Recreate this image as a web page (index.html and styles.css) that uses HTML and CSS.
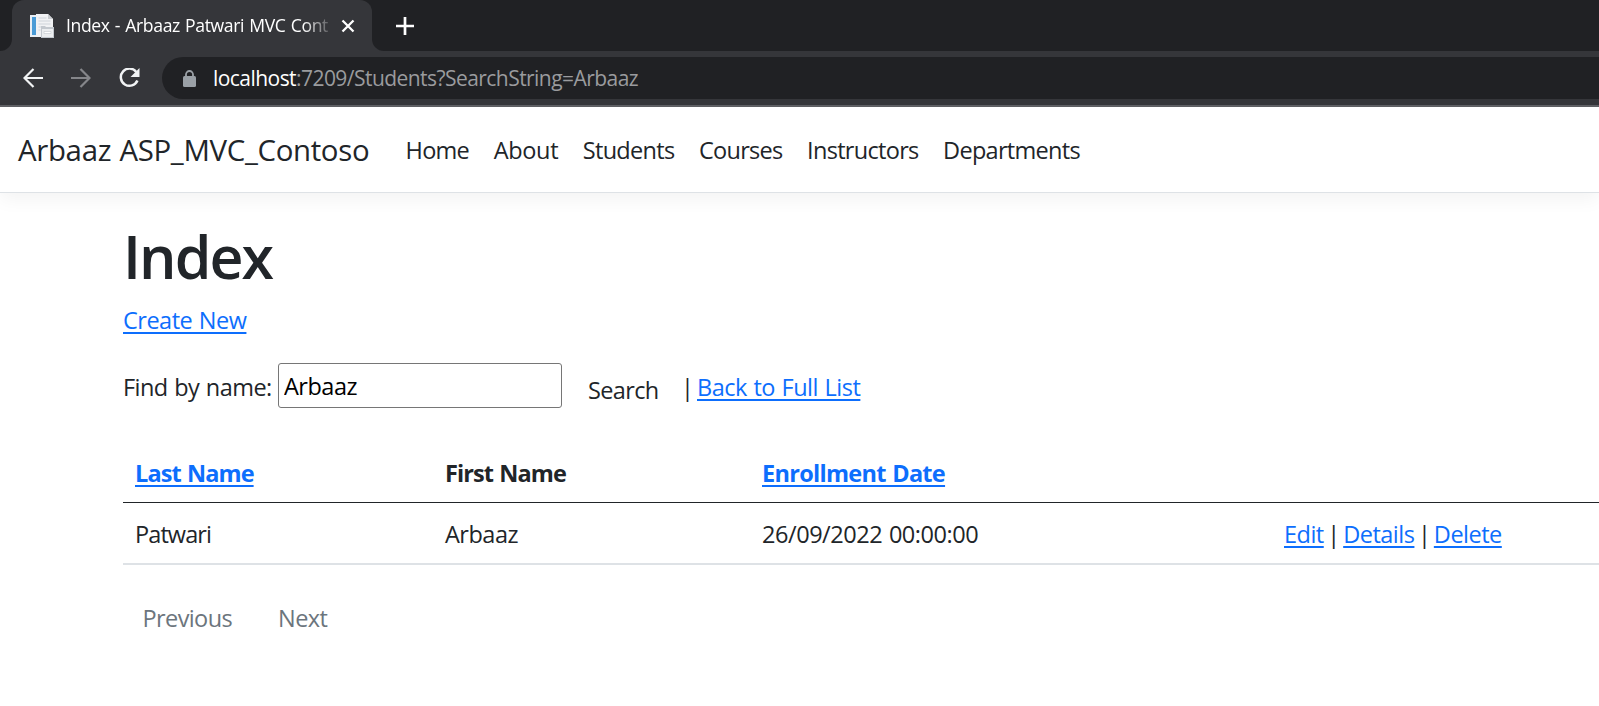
FILE: index.html
```html
<!DOCTYPE html>
<html lang="en">
<head>
<meta charset="utf-8">
<title>Index - Arbaaz Patwari MVC Contoso</title>
<link rel="stylesheet" href="styles.css">
</head>
<body>
<div class="browser">
  <div class="tabstrip">
    <div class="tab-prev"></div>
    <div class="tab">
      <svg class="favicon" width="24" height="24" viewBox="0 0 24 24">
        <path d="M0 1h7v22H0z" fill="#e8eef4"/><path d="M2 3h4v18H2z" fill="#4a9bd6"/>
        <path d="M6 0h12l5 5v18H6z" fill="#f1f2f4"/><path d="M18 0l5 5h-5z" fill="#c9ccd0"/>
        <path d="M8.500 4h8M8.500 7h12M8.500 10h12M8.500 13h3M8.500 16h2" stroke="#cfd4da" stroke-width="1.200"/>
        <path d="M11 14v-2h4l1 1h8v11H11z" fill="#c3c8ce"/><path d="M12 15h11v8H12z" fill="#eceef0"/><path d="M14 17.500h7v2h-7z" fill="#fff" stroke="#c5cacf" stroke-width=".6"/>
      </svg>
      <span class="tab-title">Index - Arbaaz Patwari MVC Cont</span>
      <svg class="tab-close" width="14" height="14" viewBox="0 0 14 14"><path d="M1.500 1.500l11 11M12.500 1.500l-11 11" stroke="#fff" stroke-width="2.300"/></svg>
    </div>
    <div class="tab-next"><svg width="18" height="18" viewBox="0 0 18 18"><path d="M9 0v18M0 9h18" stroke="#fff" stroke-width="2.700"/></svg></div>
  </div>
  <div class="toolbar">
    <div class="tools">
      <svg width="20" height="20" viewBox="0 0 20 20" fill="none" stroke="#f1f3f4" stroke-width="2.200"><path d="M20 10H1.800M10.500 1L1.500 10l9 9"/></svg>
      <svg width="20" height="20" viewBox="0 0 20 20" fill="none" stroke="#85868a" stroke-width="2.200"><path d="M0 10h18.200M9.500 1l9 9-9 9"/></svg>
      <svg width="22" height="20" viewBox="0 0 22 20" fill="none" stroke="#f1f3f4" stroke-width="2.500"><path d="M17.300 4A8.600 8.600 0 1 0 18.400 12.500"/><path d="M20.500 0v9h-9z" fill="#f1f3f4" stroke="none"/></svg>
    </div>
    <div class="omnibox">
      <svg width="13" height="17" viewBox="0 0 13 17"><rect y="6" width="13" height="11" rx="1.500" fill="#9aa0a6"/><path d="M3 7V4.500a3.500 3.500 0 0 1 7 0V7" fill="none" stroke="#9aa0a6" stroke-width="1.800"/></svg>
      <span class="url"><span class="host">localhost</span><span class="path">:7209/Students?SearchString=Arbaaz</span></span>
    </div>
  </div>
</div>
<header class="navbar">
  <a class="brand">Arbaaz ASP_MVC_Contoso</a>
  <nav class="links"><a>Home</a><a class="loose">About</a><a>Students</a><a>Courses</a><a>Instructors</a><a>Departments</a></nav>
</header>
<main class="content">
  <h1>Index</h1>
  <p class="create"><a class="link">Create New</a></p>
  <form class="search">
    <label for="q">Find by name:</label>
    <input id="q" type="text" value="Arbaaz">
    <span class="btn">Search</span>
    <span class="bar">|</span>
    <a class="link back">Back to Full List</a>
  </form>
  <div class="table">
    <div class="row head"><div class="tight"><a class="link">Last Name</a></div><div class="tight">First Name</div><div><a class="link">Enrollment Date</a></div><div></div></div>
    <div class="row"><div class="tight">Patwari</div><div>Arbaaz</div><div class="date">26/09/2022 00:00:00</div><div class="actions"><a class="link">Edit</a><span>|</span><a class="link">Details</a><span>|</span><a class="link">Delete</a></div></div>
  </div>
  <div class="pager"><span>Previous</span><span>Next</span></div>
</main>
</body>
</html>
```
FILE: styles.css
```css
* { box-sizing: border-box; }
body { margin: 0; width: 1599px; height: 706px; overflow: hidden; background: #fff; color: #212529; font: 23.5px/36px "Open Sans", "Noto Sans", sans-serif; letter-spacing: -.5px; word-spacing: 1px; white-space: nowrap; }
svg { display: block; flex: none; }
.browser { height: 107px; background: #35363a; border-bottom: 2px solid #5f6064; }
.tabstrip { display: flex; height: 51px; }
.tab-prev { width: 12px; border-bottom-right-radius: 12px; }
.tab { width: 360px; padding: 0 17px 0 18px; display: flex; align-items: center; background: #35363a; box-shadow: 0 -12px 0 12px #202124; clip-path: inset(0); border-radius: 12px 12px 0 0; }
.tab-prev, .tab-next { background: #202124; }
.tab-title { flex: 1; margin: 0 6px 2px 12px; font-size: 17.6px; letter-spacing: -.38px; color: #fff; mask-image: linear-gradient(90deg, #000 88%, transparent); }
.tab-next { flex: 1; padding: 17px 0 0 24px; border-bottom-left-radius: 12px; }
.toolbar { display: flex; height: 54px; padding-top: 6px; }
.tools { width: 162px; padding: 11px 0 0 23px; display: flex; gap: 28px; }
.omnibox { flex: 1; height: 42px; padding-left: 21px; display: flex; align-items: center; gap: 17px; background: #202124; border-radius: 21px 0 0 21px; }
.url { font-size: 21px; letter-spacing: -.55px; color: #9a9b9e; }
.host { color: #fff; }
.navbar { height: 86px; padding: 25px 18px 0; display: flex; border-bottom: 1px solid #dee2e6; box-shadow: 0 6px 18px rgba(0,0,0,.05); }
.brand { width: 387.5px; font-size: 29.4px; letter-spacing: -.32px; }
.links { display: flex; gap: 24.5px; letter-spacing: -.7px; }
.loose { letter-spacing: -.3px; }
.content { padding: 27px 0 0 123px; }
h1 { margin: 0; font-size: 59px; line-height: 72px; font-weight: 600; letter-spacing: -1.9px; }
.create { margin: 10px 0 0; }
.link { color: #0d6efd; text-decoration: underline; text-decoration-thickness: 2px; text-underline-offset: 2.5px; }
.search { display: flex; margin-top: 25px; height: 45px; }
.search label { width: 155px; padding-top: 6px; letter-spacing: -.55px; }
.search input { width: 284px; height: 45px; padding: 1px 5px 0; border: 1px solid #767676; border-radius: 3px; background: #fff; color: #000; font: inherit; letter-spacing: inherit; }
.btn { width: 93px; margin-left: 26px; padding-top: 9px; letter-spacing: -.65px; }
.bar { width: 16px; padding-top: 6px; }
.back { padding-top: 6px; }
.table { margin-top: 47px; }
.row { display: grid; grid-template-columns: 310px 317px 522px 1fr; height: 62px; padding-top: 13px; border-bottom: 2px solid #dee2e6; }
.row > div { padding-left: 12px; }
.head { height: 48px; padding-top: 0; border-bottom: 1px solid #212529; font-weight: 700; letter-spacing: -.7px; }
.tight { letter-spacing: -.9px; }
.date { letter-spacing: -.45px; }
.actions { display: flex; gap: 3.5px; }
.pager { display: flex; gap: 46px; padding: 35px 0 0 19.5px; color: #6c757d; letter-spacing: -.6px; }
```
